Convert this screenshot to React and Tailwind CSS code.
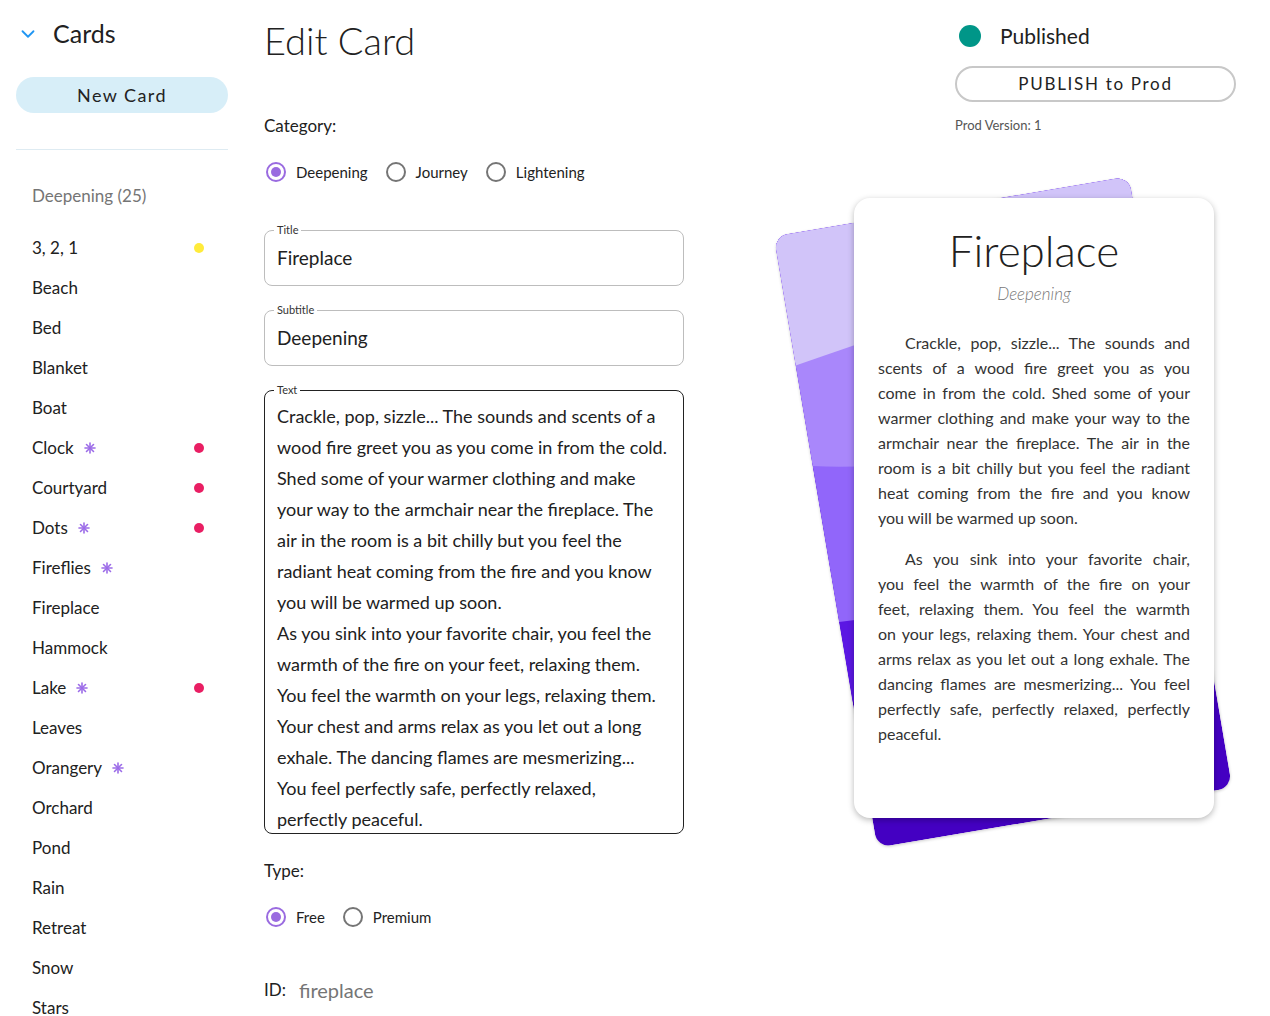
import { ChevronDown } from "lucide-react";

const cards = [
  { name: "3, 2, 1", dot: "bg-[#ffeb3b]" },
  { name: "Beach" },
  { name: "Bed" },
  { name: "Blanket" },
  { name: "Boat" },
  { name: "Clock", star: true, dot: "bg-[#e91e63]" },
  { name: "Courtyard", dot: "bg-[#e91e63]" },
  { name: "Dots", star: true, dot: "bg-[#e91e63]" },
  { name: "Fireflies", star: true },
  { name: "Fireplace" },
  { name: "Hammock" },
  { name: "Lake", star: true, dot: "bg-[#e91e63]" },
  { name: "Leaves" },
  { name: "Orangery", star: true },
  { name: "Orchard" },
  { name: "Pond" },
  { name: "Rain" },
  { name: "Retreat" },
  { name: "Snow" },
  { name: "Stars" },
];

const editorLines = [
  "Crackle, pop, sizzle... The sounds and scents of a",
  "wood fire greet you as you come in from the cold.",
  "Shed some of your warmer clothing and make",
  "your way to the armchair near the fireplace. The",
  "air in the room is a bit chilly but you feel the",
  "radiant heat coming from the fire and you know",
  "you will be warmed up soon.",
  "As you sink into your favorite chair, you feel the",
  "warmth of the fire on your feet, relaxing them.",
  "You feel the warmth on your legs, relaxing them.",
  "Your chest and arms relax as you let out a long",
  "exhale. The dancing flames are mesmerizing...",
  "You feel perfectly safe, perfectly relaxed,",
  "perfectly peaceful.",
];

const previewParas = [
  [
    "Crackle, pop, sizzle... The sounds and",
    "scents of a wood fire greet you as you",
    "come in from the cold. Shed some of your",
    "warmer clothing and make your way to the",
    "armchair near the fireplace. The air in the",
    "room is a bit chilly but you feel the radiant",
    "heat coming from the fire and you know",
    "you will be warmed up soon.",
  ],
  [
    "As you sink into your favorite chair,",
    "you feel the warmth of the fire on your",
    "feet, relaxing them. You feel the warmth",
    "on your legs, relaxing them. Your chest and",
    "arms relax as you let out a long exhale. The",
    "dancing flames are mesmerizing... You feel",
    "perfectly safe, perfectly relaxed, perfectly",
    "peaceful.",
  ],
];

const Star = () => (
  <svg width="12" height="12" viewBox="0 0 12 12" className="ml-[10px]">
    <g stroke="#9c6ce8" strokeWidth="1.6" strokeLinecap="round">
      <line x1="6" y1="1" x2="6" y2="11" />
      <line x1="1" y1="6" x2="11" y2="6" />
      <line x1="2.5" y1="2.5" x2="9.5" y2="9.5" />
      <line x1="9.5" y1="2.5" x2="2.5" y2="9.5" />
    </g>
  </svg>
);

const Radio = ({ label, checked }) => (
  <label className="flex items-center gap-[10px] mr-[18px]">
    <span
      className={`w-5 h-5 rounded-full border-2 flex items-center justify-center ${
        checked ? "border-[#9a6be0]" : "border-[#757575]"
      }`}
    >
      {checked && <span className="w-[10px] h-[10px] rounded-full bg-[#9a6be0]" />}
    </span>
    <span className="text-[15px] text-[#222]">{label}</span>
  </label>
);

const Field = ({ label, children, className }) => (
  <div className={`relative border rounded-lg ${className}`}>
    <span className="absolute -top-[8px] left-[9px] px-[3px] bg-white text-[11px] leading-[14px] text-[#333]">
      {label}
    </span>
    {children}
  </div>
);

export default function App() {
  return (
    <div className="flex min-h-[1016px] bg-white text-[#212121] font-['Lato',sans-serif] overflow-hidden">
      {/* Sidebar */}
      <aside className="w-[212px] ml-4 pt-[20px] shrink-0">
        <div className="flex items-center h-[28px]">
          <ChevronDown className="w-[22px] h-[22px] ml-[1px] text-[#2196f3]" strokeWidth={2} />
          <span className="ml-[14px] text-[25px]">Cards</span>
        </div>
        <button className="mt-[29px] w-full h-9 rounded-full bg-[#d7eef8] text-[18px] tracking-[0.08em] text-[#222]">
          New Card
        </button>
        <div className="mt-[36px] h-px bg-[#deebf2]" />
        <div className="mt-[34px] pl-4 text-[17px] leading-6 text-[#757575]">Deepening (25)</div>
        <ul className="mt-[20px]">
          {cards.map((c) => (
            <li key={c.name} className="h-10 flex items-center justify-between pl-4 pr-6 text-[17px]">
              <span className="flex items-center">
                {c.name}
                {c.star && <Star />}
              </span>
              {c.dot && <span className={`w-[10px] h-[10px] rounded-full ${c.dot}`} />}
            </li>
          ))}
        </ul>
      </aside>

      {/* Editor */}
      <main className="w-[420px] ml-9 pt-[16px] shrink-0">
        <h1 className="text-[38px] leading-[48px] font-light">Edit Card</h1>
        <div className="mt-[50px] text-[17px] leading-6">Category:</div>
        <div className="mt-[22px] pl-[2px] flex items-center h-6">
          <Radio label="Deepening" checked />
          <Radio label="Journey" />
          <Radio label="Lightening" />
        </div>

        <Field label="Title" className="mt-[46px] h-14 border-[#bdbdbd] flex items-center px-3">
          <span className="text-[19px]">Fireplace</span>
        </Field>
        <Field label="Subtitle" className="mt-6 h-14 border-[#bdbdbd] flex items-center px-3">
          <span className="text-[19px]">Deepening</span>
        </Field>
        <Field label="Text" className="mt-6 h-[444px] border-[#222]">
          <div className="h-full overflow-hidden px-3 pt-[10px] text-[18px] leading-[31px] whitespace-nowrap">
            {editorLines.map((l, i) => (
              <div key={i}>{l}</div>
            ))}
          </div>
        </Field>

        <div className="mt-[25px] text-[17px] leading-6">Type:</div>
        <div className="mt-[22px] pl-[2px] flex items-center h-6">
          <Radio label="Free" checked />
          <Radio label="Premium" />
        </div>
        <div className="mt-[47px] flex items-center h-7">
          <span className="text-[17px]">ID:</span>
          <span className="ml-[13px] text-[20px] text-[#757575]">fireplace</span>
        </div>
      </main>

      {/* Publish + preview */}
      <section className="flex-1 pt-[22px]">
        <div className="ml-[271px] w-[281px]">
          <div className="flex items-center h-7">
            <span className="ml-1 w-[22px] h-[22px] rounded-full bg-[#009688]" />
            <span className="ml-[19px] text-[21px]">Published</span>
          </div>
          <button className="mt-4 w-full h-9 rounded-full border-2 border-[#c8c8c8] text-[17px] tracking-[0.1em] text-[#222]">
            PUBLISH to Prod
          </button>
          <div className="mt-[15px] text-[13px] leading-4 text-[#555]">Prod Version: 1</div>
        </div>

        <div className="relative ml-[170px] mt-[65px] w-[360px] h-[620px]">
          <div className="absolute inset-0 -translate-x-[31px] translate-y-[4px] -rotate-[9.6deg] rounded-[14px] overflow-hidden shadow-[0_1px_3px_rgba(0,0,0,0.2)]">
            <svg width="360" height="620" viewBox="0 0 360 620" className="block">
              <rect width="360" height="620" fill="#4400c2" />
              <path d="M0,0 H360 V450 Q180,462 0,472 Z" fill="#5b17e3" />
              <path d="M0,0 H360 V380 Q180,402 0,391 Z" fill="#9166fa" />
              <path d="M0,0 H360 V250 Q110,258 0,233 Z" fill="#a987fb" />
              <path d="M0,0 H360 V70 Q140,108 0,131 Z" fill="#d1c4f9" />
            </svg>
          </div>
          <div className="relative w-full h-full bg-white rounded-[16px] shadow-[0_2px_6px_rgba(0,0,0,0.28)] pt-[26px] px-6">
            <div className="text-center text-[44px] leading-[52px] font-light">Fireplace</div>
            <div className="mt-[6px] text-center text-[17px] leading-6 italic font-light text-[#777]">Deepening</div>
            <div className="mt-6 text-[16px] leading-[25px] text-[#333]">
              {previewParas.map((p, pi) => (
                <div key={pi} className={pi > 0 ? "mt-4" : ""}>
                  {p.map((l, i) => (
                    <div
                      key={i}
                      className={`whitespace-nowrap ${i === 0 ? "pl-[27px]" : ""} ${
                        i < p.length - 1 ? "text-justify [text-align-last:justify]" : ""
                      }`}
                    >
                      {l}
                    </div>
                  ))}
                </div>
              ))}
            </div>
          </div>
        </div>
      </section>
    </div>
  );
}
